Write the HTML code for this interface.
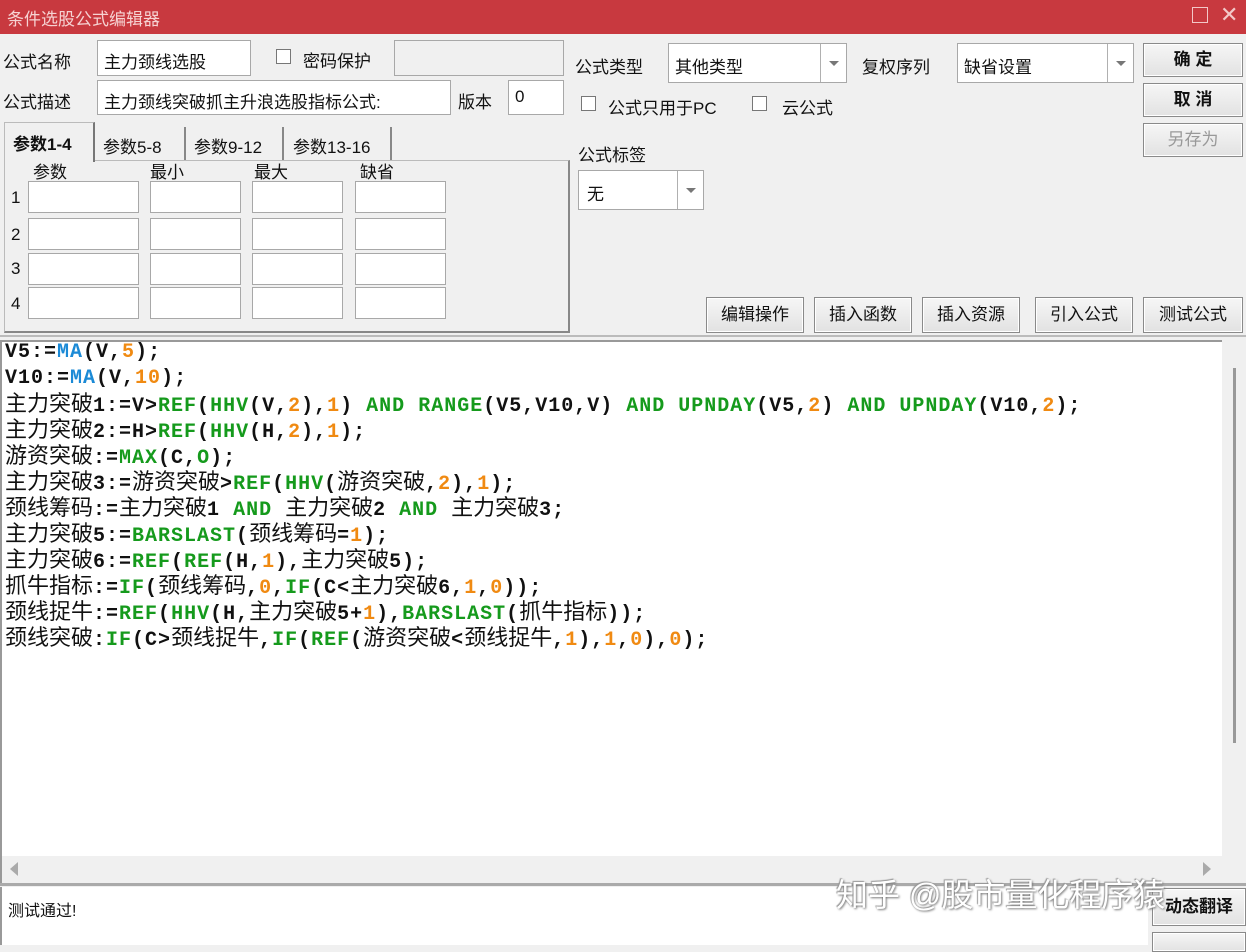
<!DOCTYPE html>
<html><head><meta charset="utf-8"><style>
*{margin:0;padding:0;box-sizing:border-box}
body{width:1246px;height:945px;overflow:hidden;background:#f0f0f0;position:relative;font-family:"Liberation Sans","Noto Sans CJK SC",sans-serif;font-size:17px;color:#111}
.a{position:absolute;white-space:nowrap}
.in{position:absolute;background:#fff;border:1px solid #a8a8a8}
.btn{position:absolute;border:1px solid #8a8a8a;background:linear-gradient(#f6f6f6,#e2e2e2);text-align:center;box-shadow:inset 0 0 0 1px #fff}
.cb{position:absolute;width:15px;height:15px;border:1px solid #777;background:#fff}
.dd{position:absolute;top:0;right:0;width:26px;height:100%;border-left:1px solid #b0b0b0}
.dd:after{content:"";position:absolute;left:8px;top:50%;margin-top:-2px;border:5px solid transparent;border-top:5px solid #777;border-bottom:0}
#code{position:absolute;left:0;top:340px;width:1222px;height:516px;background:#fff;border-left:2px solid #999;border-top:2px solid #999}
.ln{position:absolute;left:3px;height:26px;line-height:22px;white-space:nowrap;font-family:"Liberation Mono",monospace;font-weight:bold;font-size:20px;letter-spacing:1px;color:#111}
.ln .c{font-family:"Liberation Sans","Noto Sans CJK SC",sans-serif;font-weight:normal;font-size:22px;letter-spacing:0;line-height:20px}
.g{color:#159a1c}.o{color:#f08a12}.b{color:#1b8ad6}
</style></head><body>
<div class="a" style="left:0;top:0;width:1246px;height:34px;background:#c8393f"></div>
<div class="a" style="left:7px;top:5px;color:#f6d2d2;font-size:17px">条件选股公式编辑器</div>
<div class="a" style="left:1192px;top:7px;width:16px;height:16px;border:1.5px solid #f3c8c8"></div>
<div class="a" style="left:1220px;top:2px;color:#f3c8c8;font-size:22px">✕</div>

<div class="a" style="left:3px;top:48px">公式名称</div>
<div class="in" style="left:97px;top:40px;width:154px;height:36px"></div>
<div class="a" style="left:104px;top:48px">主力颈线选股</div>
<div class="cb" style="left:276px;top:49px"></div>
<div class="a" style="left:303px;top:47px">密码保护</div>
<div class="in" style="left:394px;top:40px;width:170px;height:36px;background:#f0f0f0"></div>
<div class="a" style="left:3px;top:88px">公式描述</div>
<div class="in" style="left:97px;top:80px;width:354px;height:35px"></div>
<div class="a" style="left:104px;top:88px">主力颈线突破抓主升浪选股指标公式:</div>
<div class="a" style="left:458px;top:88px">版本</div>
<div class="in" style="left:508px;top:80px;width:56px;height:35px"></div>
<div class="a" style="left:515px;top:87px">0</div>

<div class="a" style="left:4px;top:160px;width:566px;height:173px;border:1px solid #bbb;border-right:2px solid #888;border-bottom:2px solid #888"></div>
<div class="a" style="left:4px;top:122px;width:91px;height:40px;background:#f0f0f0;border:1px solid #bbb;border-bottom:none;border-right:2px solid #777"></div>
<div class="a" style="left:13px;top:130px;font-weight:bold">参数1-4</div>
<div class="a" style="left:96px;top:127px;width:90px;height:33px;border-right:2px solid #888"></div>
<div class="a" style="left:103px;top:133px">参数5-8</div>
<div class="a" style="left:194px;top:133px">参数9-12</div>
<div class="a" style="left:245px;top:127px;width:39px;height:33px;border-right:2px solid #888"></div>
<div class="a" style="left:293px;top:133px">参数13-16</div>
<div class="a" style="left:390px;top:127px;width:2px;height:33px;background:#888"></div>
<div class="a" style="left:33px;top:158px">参数</div>
<div class="a" style="left:150px;top:158px">最小</div>
<div class="a" style="left:254px;top:158px">最大</div>
<div class="a" style="left:360px;top:158px">缺省</div>
<div class="a" style="left:11px;top:188px">1</div>
<div class="a" style="left:11px;top:225px">2</div>
<div class="a" style="left:11px;top:259px">3</div>
<div class="a" style="left:11px;top:294px">4</div>
<div class="in" style="left:28px;top:181px;width:111px;height:32px"></div>
<div class="in" style="left:150px;top:181px;width:91px;height:32px"></div>
<div class="in" style="left:252px;top:181px;width:91px;height:32px"></div>
<div class="in" style="left:355px;top:181px;width:91px;height:32px"></div>
<div class="in" style="left:28px;top:218px;width:111px;height:32px"></div>
<div class="in" style="left:150px;top:218px;width:91px;height:32px"></div>
<div class="in" style="left:252px;top:218px;width:91px;height:32px"></div>
<div class="in" style="left:355px;top:218px;width:91px;height:32px"></div>
<div class="in" style="left:28px;top:253px;width:111px;height:32px"></div>
<div class="in" style="left:150px;top:253px;width:91px;height:32px"></div>
<div class="in" style="left:252px;top:253px;width:91px;height:32px"></div>
<div class="in" style="left:355px;top:253px;width:91px;height:32px"></div>
<div class="in" style="left:28px;top:287px;width:111px;height:32px"></div>
<div class="in" style="left:150px;top:287px;width:91px;height:32px"></div>
<div class="in" style="left:252px;top:287px;width:91px;height:32px"></div>
<div class="in" style="left:355px;top:287px;width:91px;height:32px"></div>

<div class="a" style="left:575px;top:53px">公式类型</div>
<div class="in" style="left:668px;top:43px;width:179px;height:40px"><div class="dd"></div></div>
<div class="a" style="left:675px;top:53px">其他类型</div>
<div class="a" style="left:862px;top:53px">复权序列</div>
<div class="in" style="left:957px;top:43px;width:177px;height:40px"><div class="dd"></div></div>
<div class="a" style="left:964px;top:53px">缺省设置</div>
<div class="btn" style="left:1143px;top:43px;width:100px;height:34px;line-height:31px;font-weight:bold">确&nbsp;定</div>
<div class="btn" style="left:1143px;top:83px;width:100px;height:34px;line-height:31px;font-weight:bold">取&nbsp;消</div>
<div class="btn" style="left:1143px;top:123px;width:100px;height:34px;line-height:31px;color:#999">另存为</div>
<div class="cb" style="left:581px;top:96px"></div>
<div class="a" style="left:608px;top:94px">公式只用于PC</div>
<div class="cb" style="left:752px;top:96px"></div>
<div class="a" style="left:782px;top:94px">云公式</div>
<div class="a" style="left:578px;top:141px">公式标签</div>
<div class="in" style="left:578px;top:170px;width:126px;height:40px"><div class="dd"></div></div>
<div class="a" style="left:587px;top:180px">无</div>

<div class="btn" style="left:706px;top:297px;width:98px;height:36px;line-height:33px">编辑操作</div>
<div class="btn" style="left:814px;top:297px;width:98px;height:36px;line-height:33px">插入函数</div>
<div class="btn" style="left:922px;top:297px;width:98px;height:36px;line-height:33px">插入资源</div>
<div class="btn" style="left:1035px;top:297px;width:98px;height:36px;line-height:33px">引入公式</div>
<div class="btn" style="left:1143px;top:297px;width:100px;height:36px;line-height:33px">测试公式</div>
<div class="a" style="left:0;top:335px;width:1246px;height:2px;background:#bbb"></div>

<div id="code">
<div class="ln" style="top:0">V5:=<span class="b">MA</span>(V,<span class="o">5</span>);</div>
<div class="ln" style="top:26px">V10:=<span class="b">MA</span>(V,<span class="o">10</span>);</div>
<div class="ln" style="top:52px"><span class="c">主力突破</span>1:=V&gt;<span class="g">REF</span>(<span class="g">HHV</span>(V,<span class="o">2</span>),<span class="o">1</span>) <span class="g">AND</span> <span class="g">RANGE</span>(V5,V10,V) <span class="g">AND</span> <span class="g">UPNDAY</span>(V5,<span class="o">2</span>) <span class="g">AND</span> <span class="g">UPNDAY</span>(V10,<span class="o">2</span>);</div>
<div class="ln" style="top:78px"><span class="c">主力突破</span>2:=H&gt;<span class="g">REF</span>(<span class="g">HHV</span>(H,<span class="o">2</span>),<span class="o">1</span>);</div>
<div class="ln" style="top:104px"><span class="c">游资突破</span>:=<span class="g">MAX</span>(C,<span class="g">O</span>);</div>
<div class="ln" style="top:130px"><span class="c">主力突破</span>3:=<span class="c">游资突破</span>&gt;<span class="g">REF</span>(<span class="g">HHV</span>(<span class="c">游资突破</span>,<span class="o">2</span>),<span class="o">1</span>);</div>
<div class="ln" style="top:156px"><span class="c">颈线筹码</span>:=<span class="c">主力突破</span>1 <span class="g">AND</span> <span class="c">主力突破</span>2 <span class="g">AND</span> <span class="c">主力突破</span>3;</div>
<div class="ln" style="top:182px"><span class="c">主力突破</span>5:=<span class="g">BARSLAST</span>(<span class="c">颈线筹码</span>=<span class="o">1</span>);</div>
<div class="ln" style="top:208px"><span class="c">主力突破</span>6:=<span class="g">REF</span>(<span class="g">REF</span>(H,<span class="o">1</span>),<span class="c">主力突破</span>5);</div>
<div class="ln" style="top:234px"><span class="c">抓牛指标</span>:=<span class="g">IF</span>(<span class="c">颈线筹码</span>,<span class="o">0</span>,<span class="g">IF</span>(C&lt;<span class="c">主力突破</span>6,<span class="o">1</span>,<span class="o">0</span>));</div>
<div class="ln" style="top:260px"><span class="c">颈线捉牛</span>:=<span class="g">REF</span>(<span class="g">HHV</span>(H,<span class="c">主力突破</span>5+<span class="o">1</span>),<span class="g">BARSLAST</span>(<span class="c">抓牛指标</span>));</div>
<div class="ln" style="top:286px"><span class="c">颈线突破</span>:<span class="g">IF</span>(C&gt;<span class="c">颈线捉牛</span>,<span class="g">IF</span>(<span class="g">REF</span>(<span class="c">游资突破</span>&lt;<span class="c">颈线捉牛</span>,<span class="o">1</span>),<span class="o">1</span>,<span class="o">0</span>),<span class="o">0</span>);</div>
</div>
<div class="a" style="left:1233px;top:368px;width:3px;height:375px;background:#999"></div>
<div class="a" style="left:0;top:856px;width:1222px;height:27px;background:#f0f0f0;border-left:2px solid #999"></div>
<div class="a" style="left:10px;top:862px;border:7px solid transparent;border-right:8px solid #aaa;border-left:0"></div>
<div class="a" style="left:1203px;top:862px;border:7px solid transparent;border-left:8px solid #aaa;border-right:0"></div>
<div class="a" style="left:0;top:883px;width:1246px;height:3px;background:#aaa"></div>
<div class="a" style="left:0;top:887px;width:1148px;height:58px;background:#fff;border-left:2px solid #999"></div>
<div class="a" style="left:8px;top:897px;font-size:16px">测试通过!</div>
<div class="btn" style="left:1152px;top:888px;width:94px;height:38px;line-height:36px;font-weight:bold">动态翻译</div>
<div class="btn" style="left:1152px;top:932px;width:94px;height:20px"></div>
<div class="a" style="left:836px;top:870px;font-size:32px;color:#fff;text-shadow:1px 1px 2px #777,-1px -1px 1px #999">知乎 @股市量化程序猿</div>
</body></html>
